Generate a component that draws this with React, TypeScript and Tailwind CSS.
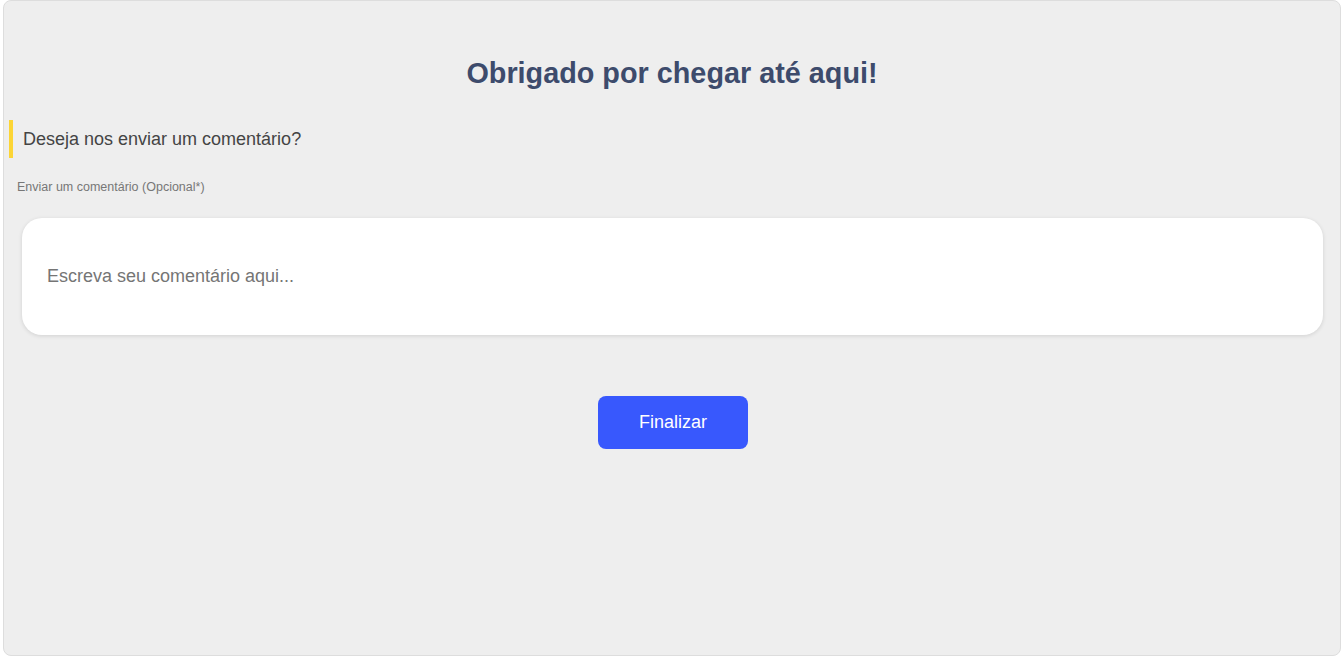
export default function App() {
  return (
    <div className="h-[657px] w-full bg-white pl-[3px] pr-[1px] pb-[1px] font-['Liberation_Sans',Arial,sans-serif]">
      <div className="flex h-full flex-col rounded-lg border border-[#dddddd] bg-[#eeeeee] pt-[56px]">
        <h1 className="text-center text-[28.8px] font-bold leading-8 text-[#3d4b6c]">
          Obrigado por chegar até aqui!
        </h1>

        <div className="mt-[31px] ml-[5px] border-l-4 border-[#fcd535] py-[8px] pl-[10px]">
          <p className="text-[18px] leading-[22px] text-[#444444]">Deseja nos enviar um comentário?</p>
        </div>

        <label className="mt-[21px] ml-[13px] text-[12.5px] leading-4 text-[#777777]">
          Enviar um comentário (Opcional*)
        </label>

        <div className="mt-[23px] ml-[18px] mr-[17px]">
          <textarea
            rows={1}
            placeholder="Escreva seu comentário aqui..."
            className="block h-[117px] w-full resize-none rounded-[20px] bg-white px-[25px] pt-[47px] text-[18px] leading-[22px] text-[#555555] shadow-[0_1px_4px_rgba(0,0,0,0.12)] outline-none placeholder:text-[#757575]"
          />
        </div>

        <div className="mt-[61px] flex justify-center pl-[2px]">
          <button className="h-[53px] w-[150px] rounded-lg bg-[#3858fd] text-[18px] text-white">
            Finalizar
          </button>
        </div>
      </div>
    </div>
  )
}
